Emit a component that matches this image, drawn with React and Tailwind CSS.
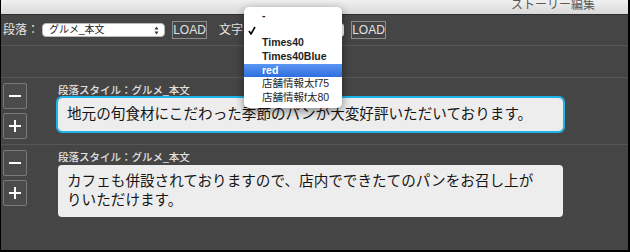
const jp = "font-['Liberation_Sans','Noto_Sans_CJK_JP',sans-serif]";

function StepButtons() {
  return (
    <div className="flex flex-col gap-[4px] ml-[2px] w-[24px] shrink-0">
      <button className="h-[26px] flex items-center justify-center bg-[#4b4b4b] border border-[#7a7a7a] rounded-[2px]">
        <span className="block w-[12px] h-[2px] bg-white"></span>
      </button>
      <button className="h-[26px] relative flex items-center justify-center bg-[#4b4b4b] border border-[#7a7a7a] rounded-[2px]">
        <span className="block w-[12px] h-[2px] bg-white"></span>
        <span className="absolute block w-[2px] h-[12px] bg-white"></span>
      </button>
    </div>
  );
}

function Paragraph({ focused, children }) {
  return (
    <div className="flex border-t border-[#575757] pt-[5px] pb-[5px]">
      <StepButtons />
      <div className="ml-[31px] pt-[1px] w-[505px]">
        <div className="text-[10.5px] leading-[12px] text-[#e2e2e2] font-medium">段落スタイル：グルメ_本文</div>
        <div
          className={
            "mt-[2px] bg-[#ededed] rounded-[4px] pl-[9px] pr-[8px] text-[14.6px] leading-[19px] text-[#151515] py-[7px] " +
            (focused ? "outline-[2px] outline-solid outline-[#1db4ea]" : "")
          }
        >
          {children}
        </div>
      </div>
    </div>
  );
}

function MenuItem({ children, active, bold }) {
  return (
    <div
      className={
        "h-[13.7px] flex items-center pl-[18px] text-[10.5px] " +
        (bold ? "font-semibold " : "") +
        (active ? "bg-gradient-to-b from-[#5a95f0] to-[#2f6ee0] text-white" : "text-[#1e1e1e]")
      }
    >
      {children}
    </div>
  );
}

export default function App() {
  return (
    <div className={"w-[630px] h-[252px] bg-black " + jp}>
      <div className="relative h-full border-l border-r-2 border-b-2 border-black bg-[#454545] flex flex-col overflow-hidden">
        <div className="h-[15px] shrink-0 bg-gradient-to-b from-[#f0f0f0] to-[#d9d9d9] border-b border-[#2e2e2e] flex justify-end items-start pr-[33px] overflow-hidden">
          <span className="text-[12px] leading-[13px] -mt-[1px] text-[#5a5a5a]">ストーリー編集</span>
        </div>

        <div className="h-[30px] shrink-0 flex items-center pl-[2px] text-[#e4e4e4]">
          <span className="text-[12px]">段落：</span>
          <div className="ml-[3px] w-[123px] h-[14px] bg-white rounded-[4px] border border-[#bbb] flex items-center justify-between pl-[6px] pr-[5px]">
            <span className="text-[10px] leading-[12px] text-[#222]">グルメ_本文</span>
            <svg width="5" height="9" viewBox="0 0 5 9">
              <path d="M2.5 0.5 L4.5 3.5 L0.5 3.5 Z M2.5 8.5 L4.5 5.5 L0.5 5.5 Z" fill="#333" />
            </svg>
          </div>
          <div className="ml-[7px] w-[35px] h-[18px] border border-[#8c8c8c] flex items-center justify-center text-[12px] leading-none">LOAD</div>
          <span className="ml-[12px] text-[12px]">文字</span>
          <div className="ml-[4px] w-[97px] h-[14px] bg-white rounded-[4px]"></div>
          <div className="ml-[7px] w-[35px] h-[18px] border border-[#8c8c8c] flex items-center justify-center text-[12px] leading-none">LOAD</div>
        </div>

        <div className="h-[32px] shrink-0 border-t border-[#575757]"></div>

        <Paragraph focused>地元の旬食材にこだわった季節のパンが大変好評いただいております。</Paragraph>
        <Paragraph>
          カフェも併設されておりますので、店内でできたてのパンをお召し上が
          <br />
          りいただけます。
        </Paragraph>

        <div className="absolute left-[243px] top-[7px] w-[98px] h-[101px] bg-white rounded-[5px] shadow-[0_3px_10px_rgba(0,0,0,0.45)] pt-[2px]">
          <MenuItem bold>-</MenuItem>
          <div className="h-[13.7px] relative">
            <svg className="absolute left-[4px] top-[3px]" width="8" height="9" viewBox="0 0 8 9">
              <path d="M1 5 L3 8 L7 1" stroke="#000" strokeWidth="1.6" fill="none" />
            </svg>
          </div>
          <MenuItem bold>Times40</MenuItem>
          <MenuItem bold>Times40Blue</MenuItem>
          <MenuItem bold active>red</MenuItem>
          <MenuItem>店舗情報太f75</MenuItem>
          <MenuItem>店舗情報f太80</MenuItem>
        </div>
      </div>
    </div>
  );
}
